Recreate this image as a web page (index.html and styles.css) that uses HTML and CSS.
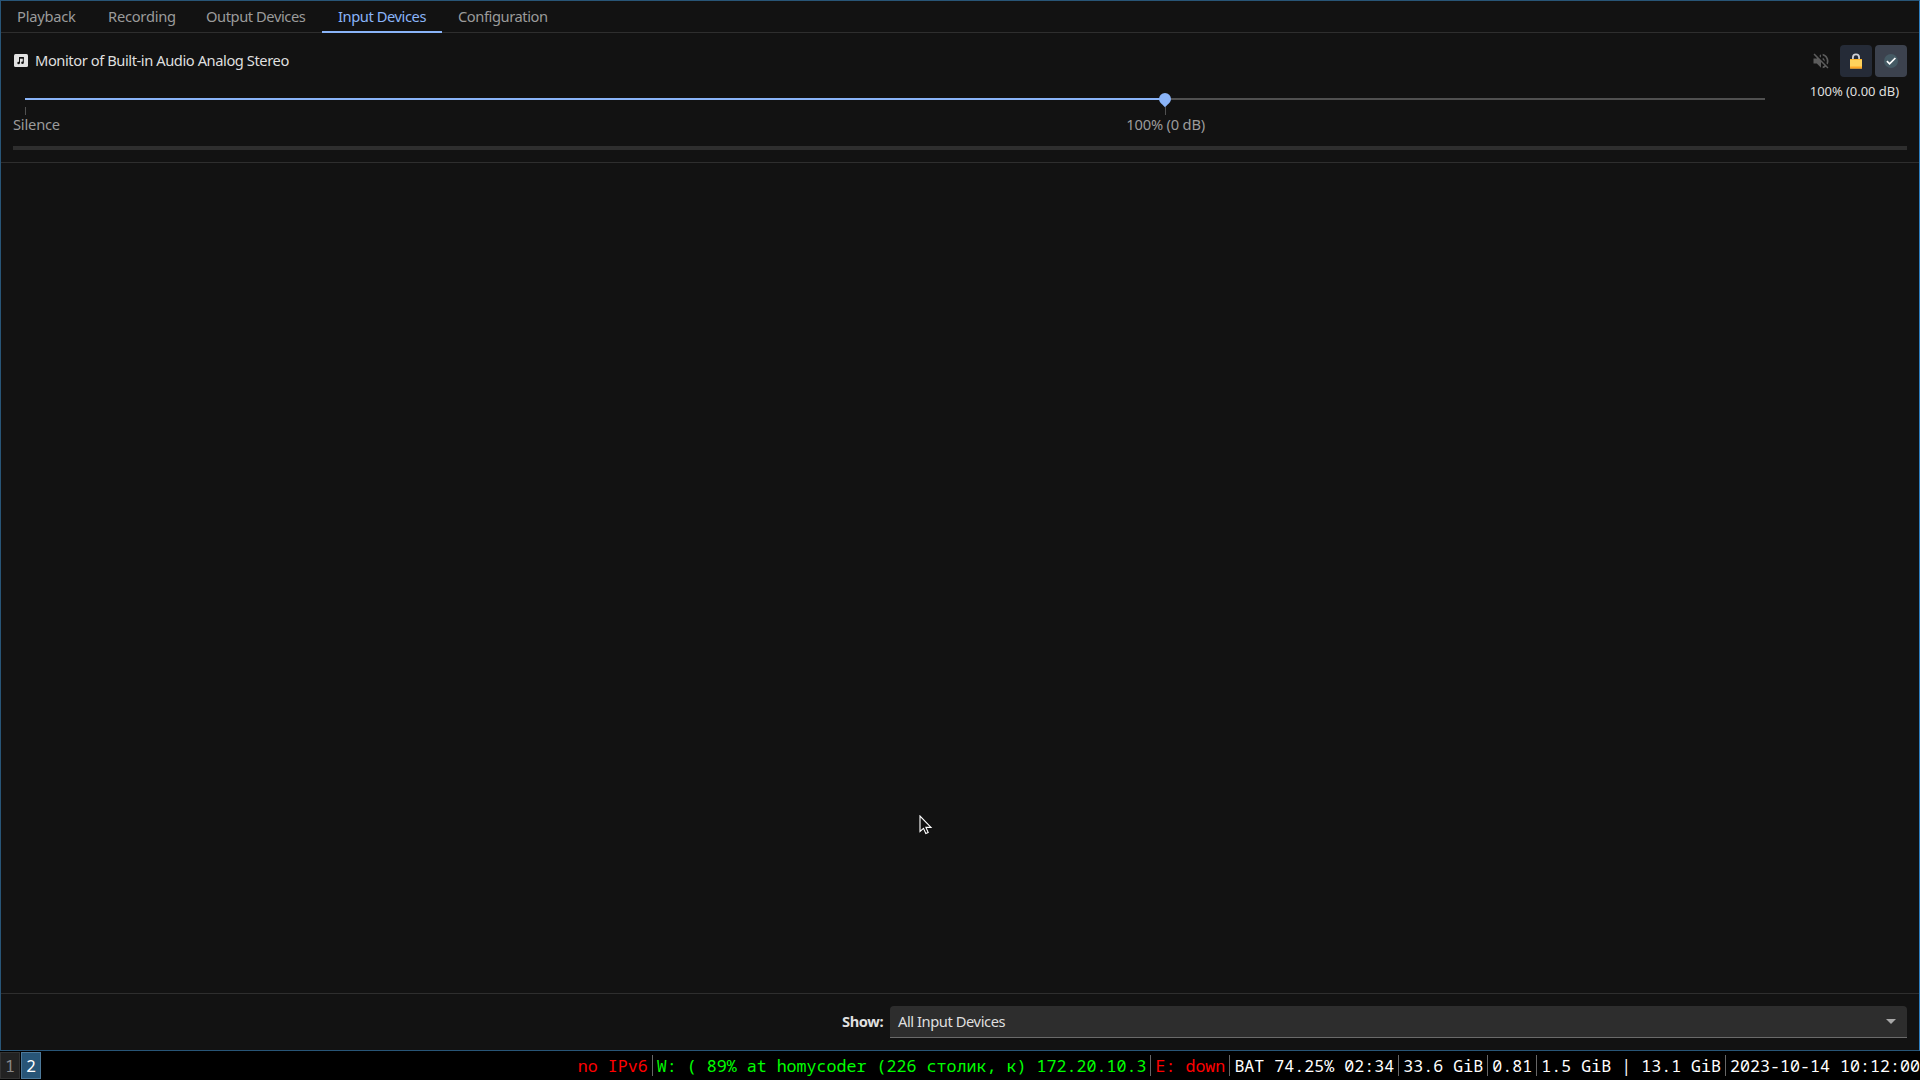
FILE: index.html
```
<!DOCTYPE html>
<html lang="en">
<head>
  <meta charset="UTF-8">
  <meta name="viewport" content="width=device-width, initial-scale=1.0">
  <title>Volume Control</title>
  <link rel="stylesheet" href="styles.css">
</head>
<body>
  <div class="window">
    <nav class="tabs">
      <a class="tab playback"><span>Playback</span></a>
      <a class="tab recording"><span>Recording</span></a>
      <a class="tab output"><span>Output Devices</span></a>
      <a class="tab input active"><span>Input Devices</span></a>
      <a class="tab config"><span>Configuration</span></a>
    </nav>

    <main class="devices">
      <section class="device">
        <div class="device-header">
          <svg class="device-icon" width="14" height="14" viewBox="0 0 14 14">
            <rect width="14" height="13" rx="1.5" fill="#e2e2e2"/>
            <path d="M5.500 9V3.500h3.800v5" fill="none" stroke="#121212" stroke-width="1"/>
            <path d="M5 3.900h4.800" stroke="#121212" stroke-width="1.600"/>
            <circle cx="4.600" cy="9" r="1.300" fill="#121212"/>
            <circle cx="8.500" cy="8.700" r="1.300" fill="#121212"/>
          </svg>
          <h1 class="device-name">Monitor of Built-in Audio Analog Stereo</h1>
          <div class="actions">
            <button class="action mute">
              <svg width="20" height="20" viewBox="0 0 24 24" fill="#5c5c5c">
                <path d="M4.3 3L3 4.3 7.3 8.6 7 9H3v6h4l5 5v-6.7l4.2 4.2c-.7.5-1.4.9-2.2 1.1v2.1c1.4-.3 2.6-1 3.700-1.800L19.700 21 21 19.700 4.300 3z"/>
                <path d="M12 4L9.900 6.100 12 8.200z"/>
                <path d="M16.500 12c0-1.800-1-3.300-2.500-4v2.200l2.450 2.450c.03-.2.05-.43.05-.65zM19 12c0 .94-.2 1.820-.54 2.640l1.510 1.510A8.800 8.800 0 0 0 21 12c0-4.280-3-7.860-7-8.770v2.060c2.890.86 5 3.540 5 6.710z"/>
              </svg>
            </button>
            <button class="action lock">
              <svg width="12" height="16" viewBox="0 0 12 16">
                <path d="M2.900 7V4.500a3.100 3.100 0 0 1 6.200 0V7" fill="none" stroke="#cfcfd4" stroke-width="1.800"/>
                <rect y="6" width="12" height="9.500" rx=".6" fill="#ffd35c"/>
                <rect y="6" width="12" height="1" fill="#ffb428"/>
                <rect y="13.500" width="12" height="2" rx=".5" fill="#ffa726"/>
              </svg>
            </button>
            <button class="action fallback">
              <svg width="14" height="14" viewBox="0 0 14 14">
                <circle cx="7" cy="7" r="7" fill="#455a64"/>
                <path d="M2.900 7.200l2.700 2.600 5.800-5.800" fill="none" stroke="#fff" stroke-width="1.700"/>
              </svg>
            </button>
          </div>
        </div>

        <div class="volume">
          <div class="scale">
            <div class="track">
              <div class="fill" style="width: 65.52%"></div>
              <svg class="knob" width="12" height="15" viewBox="0 0 12 15">
                <path d="M6 0a6 6 0 0 1 6 6c0 2.500-1.800 4.300-3.300 5.500L6 14.300 3.300 11.500C1.800 10.300 0 8.500 0 6a6 6 0 0 1 6-6z" fill="#8ab4f8"/>
              </svg>
            </div>
            <div class="marks">
              <div class="mark silence"><i></i><span>Silence</span></div>
              <div class="mark base"><i></i><span>100% (0 dB)</span></div>
            </div>
          </div>
          <div class="value"><span>100% (0.00 dB)</span></div>
        </div>

        <div class="level"></div>
      </section>
    </main>

    <footer class="filter">
      <label class="filter-label">Show:</label>
      <div class="select">
        <span>All Input Devices</span>
        <svg width="10" height="5" viewBox="0 0 10 5"><path d="M0 0h10L5 5z" fill="#a8a8a8"/></svg>
      </div>
    </footer>
  </div>

  <div class="bar">
    <div class="workspaces">
      <div class="workspace">1</div>
      <div class="workspace focused">2</div>
    </div>
    <div class="status">
      <span class="block bad">no IPv6</span>
      <span class="block good">W: ( 89% at homycoder (226 столик, к) 172.20.10.3</span>
      <span class="block bad">E: down</span>
      <span class="block">BAT 74.25% 02:34</span>
      <span class="block">33.6 GiB</span>
      <span class="block">0.81</span>
      <span class="block">1.5 GiB | 13.1 GiB</span>
      <span class="block">2023-10-14 10:12:00</span>
    </div>
  </div>

  <svg class="cursor" width="14" height="21" viewBox="0 0 14 21">
    <path d="M1 1v15.500l3.500-3.200 2.300 5.200 2.400-1-2.300-5.100H12z" fill="#121212" stroke="#fff" stroke-width="1.100"/>
  </svg>
</body>
</html>
```

FILE: styles.css
```
* {
  box-sizing: border-box;
  margin: 0;
  padding: 0;
}

body {
  width: 1920px;
  height: 1080px;
  overflow: hidden;
  background: #000;
  color: #dfdfdf;
  font-family: "Noto Sans", sans-serif;
  font-size: 14.7px;
  letter-spacing: -0.43px;
  line-height: 20px;
}

.window {
  display: flex;
  flex-direction: column;
  height: 1051px;
  background: #121212;
  border: 1px solid #285577;
  border-right-color: #2e7fc0;
}

.tabs {
  display: flex;
  height: 32px;
  border-bottom: 1px solid #2e2e2e;
}

.tab {
  height: 32px;
  padding: 5px 16px 0;
  color: #9b9b9b;
  white-space: nowrap;
}

.playback {
  width: 91px;
  letter-spacing: -0.25px;
}

.recording {
  width: 98px;
  letter-spacing: -0.25px;
}

.output { width: 132px; }
.input { width: 120px; }

.active {
  color: #8ab4f8;
  border-bottom: 2px solid #8ab4f8;
}

.devices {
  flex: 1;
}

.device {
  height: 130px;
  padding: 12px 12px 0;
  border-bottom: 1px solid #2e2e2e;
}

.device-header {
  display: flex;
  align-items: center;
  height: 32px;
}

.device-icon {
  margin-left: 1px;
}

.device-name {
  flex: 1;
  margin-left: 7px;
  padding-bottom: 2px;
  font-size: 14.7px;
  font-weight: normal;
}

.actions {
  display: flex;
  gap: 3px;
}

.action {
  display: flex;
  align-items: center;
  justify-content: center;
  width: 32px;
  height: 32px;
  border: none;
  border-radius: 4px;
  background: none;
}

.lock {
  background: #252b37;
}

.fallback {
  background: #3c424e;
}

.volume {
  display: flex;
  height: 69px;
}

.scale {
  width: 1740px;
  margin-left: 12px;
  padding-top: 21px;
}

.track {
  position: relative;
  height: 2px;
  background: #505050;
}

.fill {
  height: 2px;
  background: #8ab4f8;
}

.knob {
  position: absolute;
  left: 1134px;
  top: -5px;
}

.marks {
  display: flex;
  justify-content: space-between;
  width: 1192px;
  margin-left: -12px;
  padding-top: 7px;
  color: #9b9b9b;
  letter-spacing: -0.2px;
}

.mark {
  display: flex;
  flex-direction: column;
  white-space: nowrap;
}

.mark i {
  width: 1px;
  height: 8px;
  margin-bottom: -1px;
  background: #505050;
}

.silence i {
  margin-left: 12px;
}

.base {
  align-items: center;
}

.value {
  flex: 1;
  padding: 4px 8px 0 0;
  text-align: right;
  font-size: 13px;
  letter-spacing: -0.05px;
}

.level {
  height: 4px;
  background: #2e2e2e;
}

.filter {
  display: flex;
  align-items: center;
  height: 57px;
  padding: 0 12px 0 841px;
  border-top: 1px solid #2e2e2e;
}

.filter-label {
  width: 48px;
  padding-bottom: 2px;
  font-weight: bold;
}

.select {
  display: flex;
  flex: 1;
  align-items: center;
  justify-content: space-between;
  height: 32px;
  padding: 0 11px 1px 8px;
  background: #2d2d2d;
  border-bottom: 1px solid #6a6a6a;
  border-radius: 4px 4px 0 0;
}

.bar {
  display: flex;
  justify-content: space-between;
  height: 29px;
  padding-top: 1px;
  color: #fff;
  font-family: "Noto Sans Mono", "DejaVu Sans Mono", monospace;
  font-size: 16.67px;
  letter-spacing: normal;
}

.workspaces {
  display: flex;
  gap: 1px;
}

.workspace {
  width: 20px;
  height: 27px;
  border: 1px solid #333;
  background: #222;
  color: #888;
  line-height: 26px;
  text-align: center;
}

.focused {
  border-color: #4c7899;
  background: #285577;
  color: #fff;
}

.status {
  display: flex;
  align-items: center;
  height: 27px;
}

.block {
  padding: 0 4px;
  line-height: 21px;
  white-space: pre;
}

.block + .block {
  border-left: 1px solid #666;
}

.block:last-child {
  padding-right: 0;
}

.good {
  color: #0f0;
}

.bad {
  color: #f00;
}

.cursor {
  position: absolute;
  left: 919px;
  top: 815px;
}
```
